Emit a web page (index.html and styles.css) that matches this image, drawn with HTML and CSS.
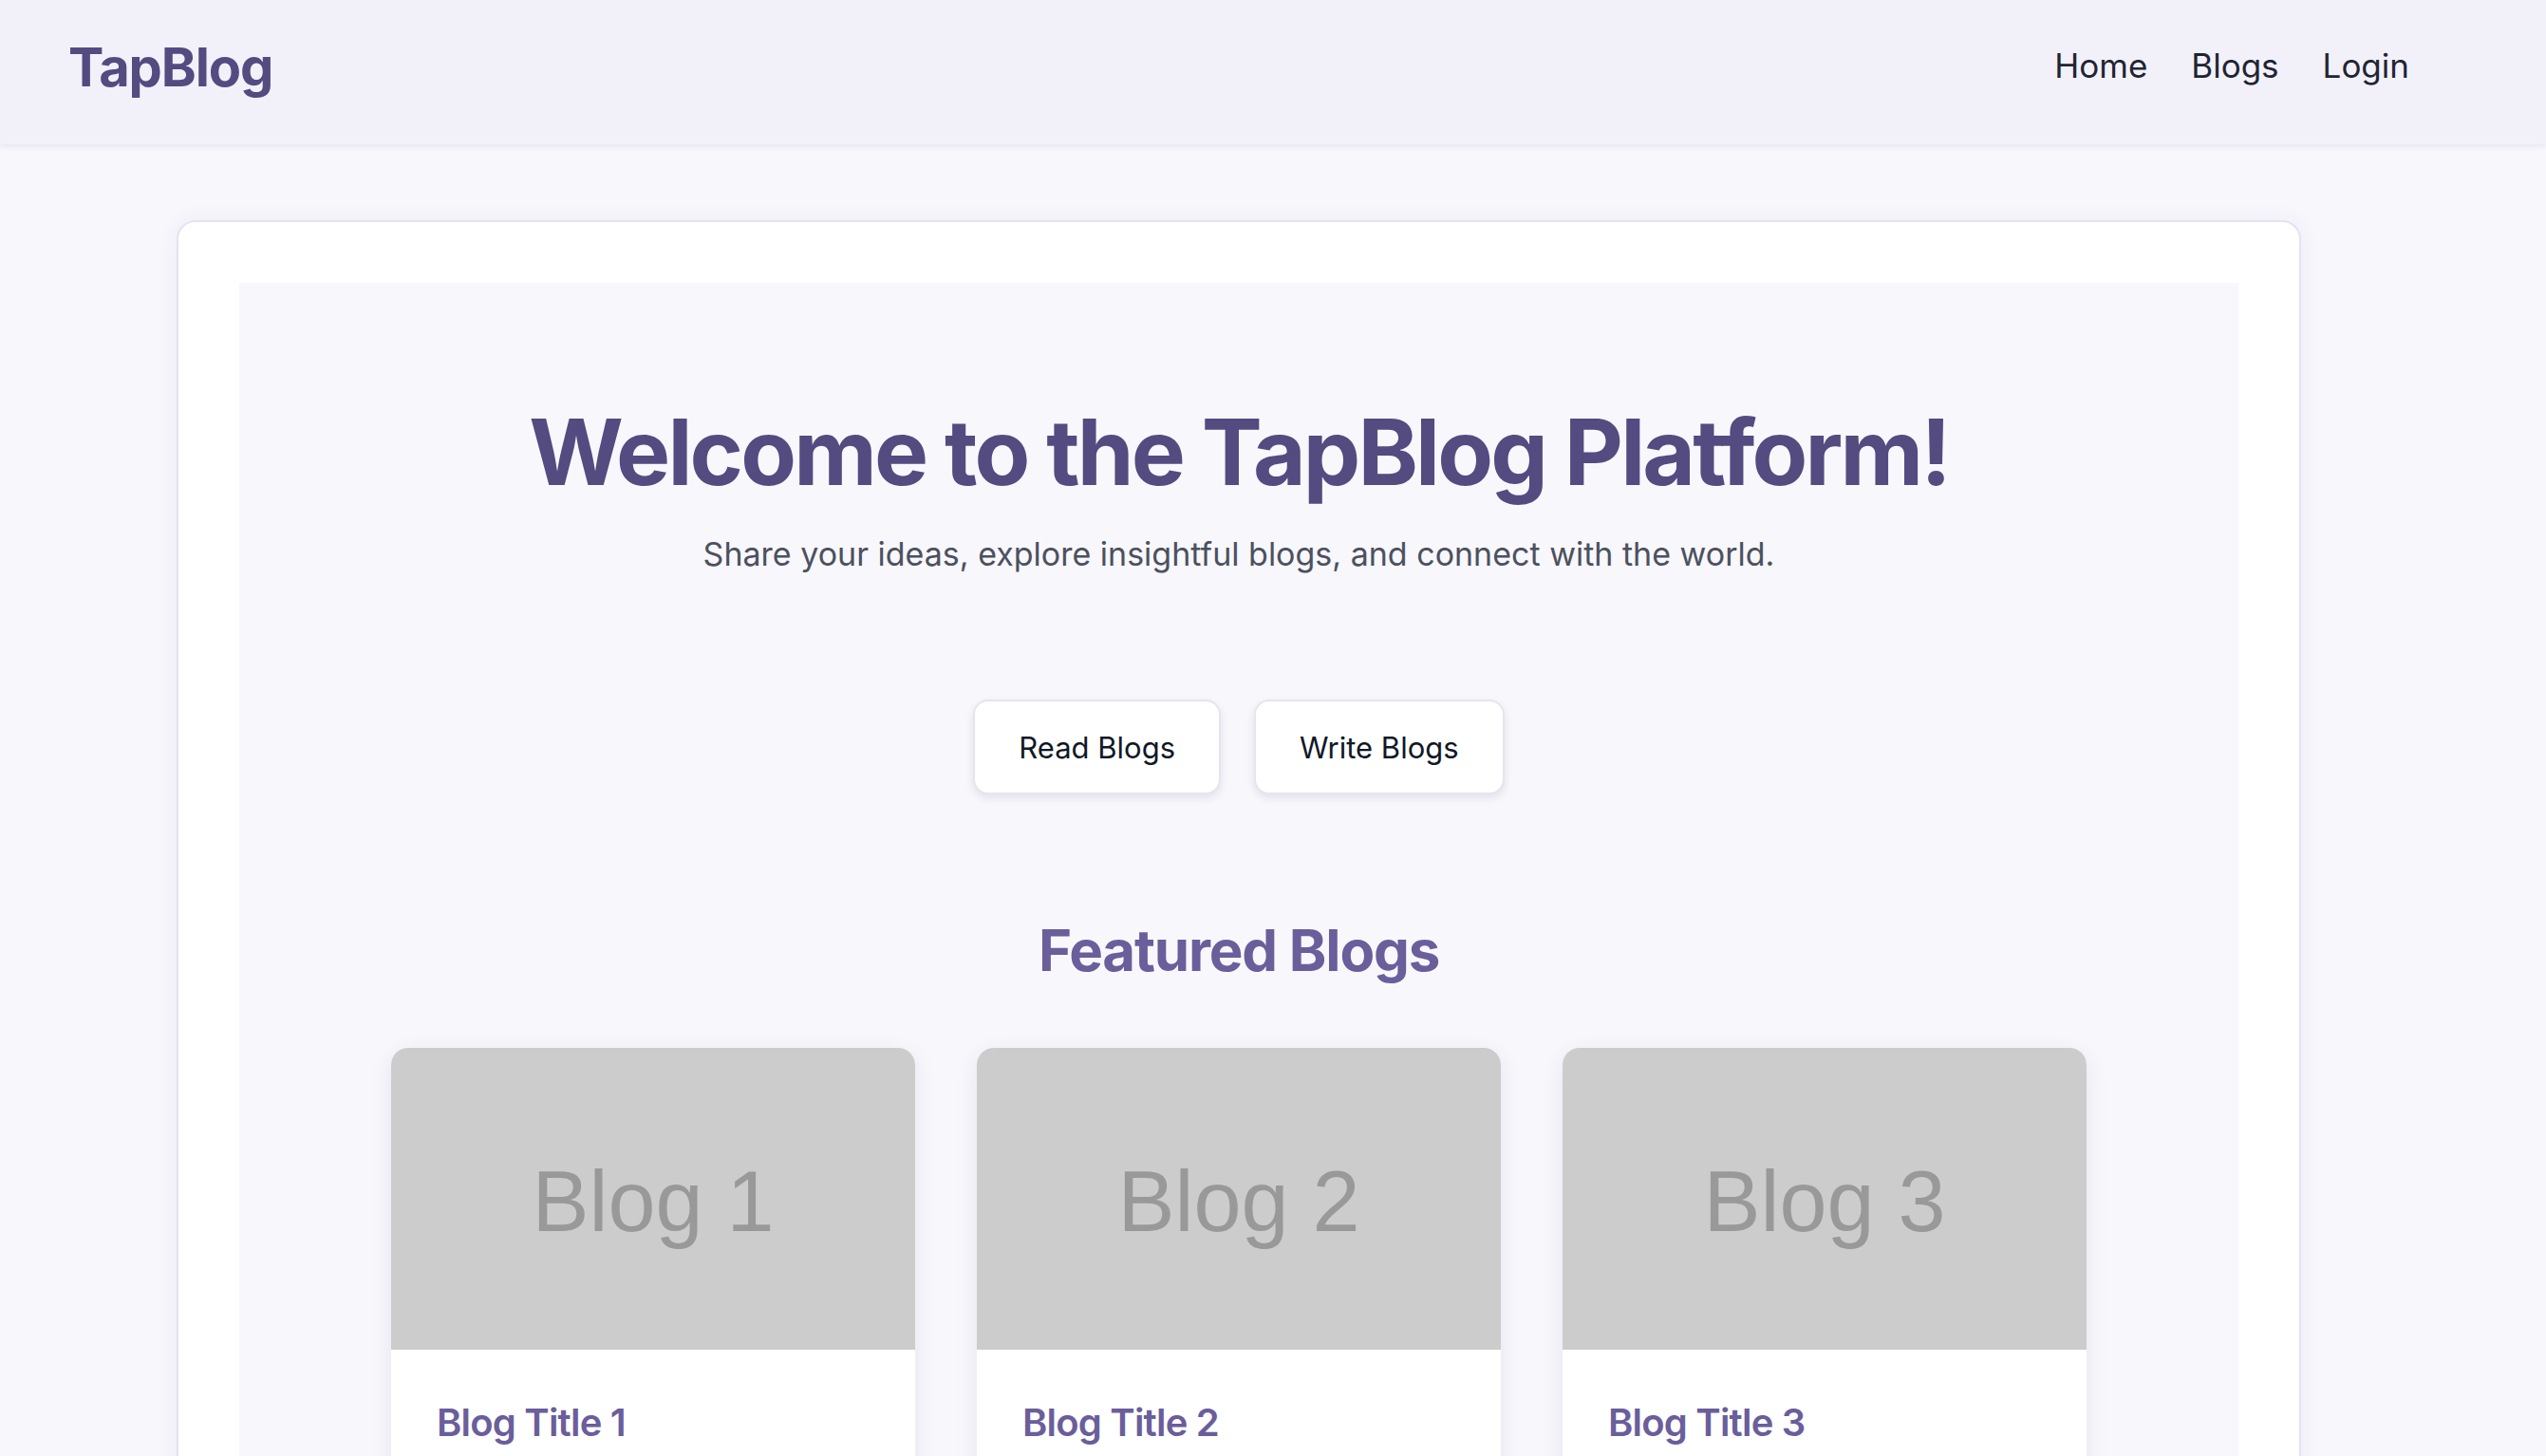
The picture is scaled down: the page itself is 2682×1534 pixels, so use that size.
FILE: index.html
```html
<!DOCTYPE html>
<html lang="en">
<head>
<meta charset="utf-8">
<title>TapBlog</title>
<link rel="stylesheet" href="styles.css">
</head>
<body>
<header class="topbar">
  <a class="logo" href="#">TapBlog</a>
  <nav class="nav">
    <a href="#">Home</a>
    <a href="#">Blogs</a>
    <a href="#">Login</a>
  </nav>
</header>
<main class="page">
  <section class="card">
    <div class="hero">
      <h1 class="hero-title">Welcome to the TapBlog Platform!</h1>
      <p class="hero-sub">Share your ideas, explore insightful blogs, and connect with the world.</p>
      <div class="actions">
        <button class="btn">Read Blogs</button>
        <button class="btn">Write Blogs</button>
      </div>
      <h2 class="featured">Featured Blogs</h2>
      <div class="grid">
        <article class="post">
          <div class="thumb">Blog 1</div>
          <div class="post-body"><h3 class="post-title">Blog Title 1</h3></div>
        </article>
        <article class="post">
          <div class="thumb">Blog 2</div>
          <div class="post-body"><h3 class="post-title">Blog Title 2</h3></div>
        </article>
        <article class="post">
          <div class="thumb">Blog 3</div>
          <div class="post-body"><h3 class="post-title">Blog Title 3</h3></div>
        </article>
      </div>
    </div>
  </section>
</main>
</body>
</html>
```

FILE: styles.css
```css
* { box-sizing: border-box; }
html, body { margin: 0; padding: 0; }
body {
  background: #f8f7fc;
  font-family: Inter, "Noto Sans", "Liberation Sans", sans-serif;
  color: #1f2937;
  height: 1534px;
  overflow: hidden;
}
.topbar {
  height: 152px;
  background: #f2f1fa;
  display: flex;
  align-items: center;
  justify-content: space-between;
  padding: 0 144px 14px 72px;
  box-shadow: 0 2px 6px rgba(60, 50, 110, 0.10);
  position: relative;
  z-index: 1;
}
.logo {
  font-size: 56px;
  font-weight: 700;
  color: #544b80;
  text-decoration: none;
  letter-spacing: -0.02em;
  margin-top: 4px;
}
.nav { display: flex; gap: 46px; }
.nav a {
  font-size: 35px;
  color: #1f2533;
  text-decoration: none;
}
.page { padding: 80px 0 0 186px; }
.card {
  width: 2238px;
  background: #ffffff;
  border: 2px solid #e4e2f3;
  border-radius: 20px;
  padding: 64px 64px 0;
  box-shadow: 0 0 24px rgba(60, 50, 110, 0.06);
}
.hero {
  background: #f8f7fc;
  padding: 120px 0 200px;
  display: flex;
  flex-direction: column;
  align-items: center;
}
.hero-title {
  margin: 0;
  font-size: 96px;
  line-height: 116px;
  font-weight: 700;
  color: #544b80;
  letter-spacing: -0.03em;
}
.hero-sub {
  margin: 29px 0 0;
  font-size: 34px;
  color: #4b5160;
}
.actions {
  margin-top: 133px;
  display: flex;
  gap: 35px;
}
.btn {
  font-family: inherit;
  font-size: 31px;
  color: #111827;
  background: #ffffff;
  border: 2px solid #e6e5ee;
  border-radius: 16px;
  padding: 0 46px;
  height: 100px;
  box-shadow: 0 4px 8px rgba(40, 30, 80, 0.10);
}
.featured {
  margin: 128px 0 0;
  font-size: 60px;
  font-weight: 700;
  color: #6a5e9b;
  letter-spacing: -0.02em;
}
.grid {
  margin-top: 67px;
  display: grid;
  grid-template-columns: repeat(3, 552px);
  gap: 65px;
}
.post {
  background: #ffffff;
  border-radius: 18px;
  overflow: hidden;
  box-shadow: 0 6px 24px rgba(40, 30, 80, 0.08);
}
.thumb {
  height: 318px;
  background: #cccccc;
  color: #999999;
  font-family: "Liberation Sans", Arial, sans-serif;
  font-size: 90px;
  display: flex;
  align-items: center;
  justify-content: center;
  padding-top: 6px;
}
.post-body { padding: 52px 48px 60px; }
.post-title {
  margin: 0;
  font-size: 40px;
  font-weight: 600;
  color: #6a5e9b;
  letter-spacing: -0.02em;
}
```
